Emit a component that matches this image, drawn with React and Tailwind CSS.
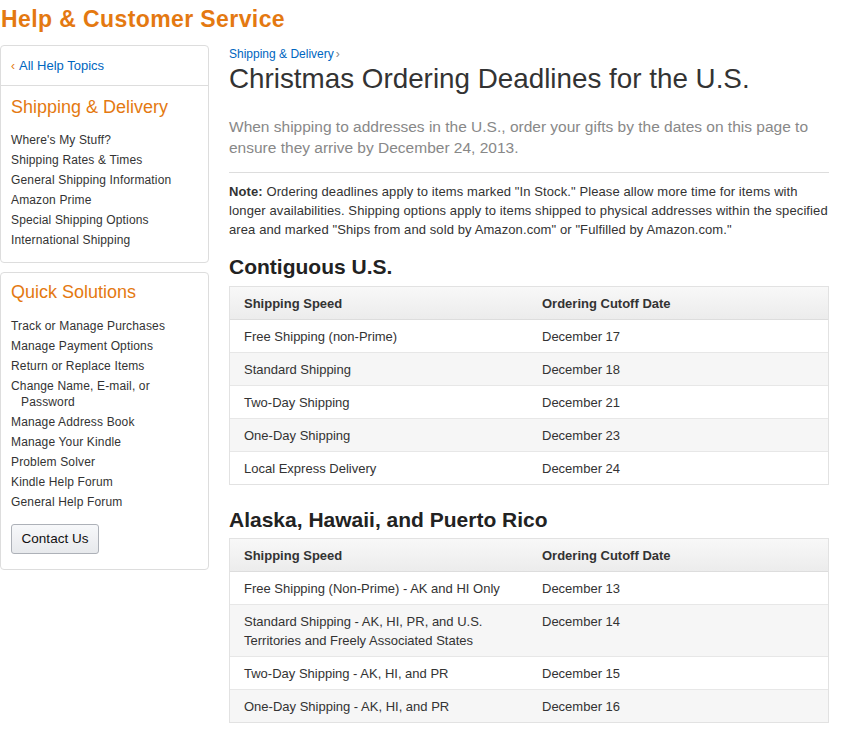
import React from "react";

const font = { fontFamily: '"Liberation Sans", Arial, sans-serif' };

function Row({ a, b, grey, last }) {
  return (
    <div
      className={`grid grid-cols-[298px_1fr] text-[13px] leading-[19px] text-[#333] ${grey ? "bg-[#f6f6f6]" : "bg-white"} ${last ? "" : "border-b border-[#e7e7e7]"}`}
    >
      <div className="pl-[14px] pr-[20px] pt-[7px] pb-[6px]">{a}</div>
      <div className="pl-[14px] pt-[7px] pb-[6px]">{b}</div>
    </div>
  );
}

function Table({ rows }) {
  return (
    <div className="border border-[#e2e2e2]">
      <div className="grid grid-cols-[298px_1fr] text-[13px] leading-[19px] font-bold text-[#333] bg-gradient-to-b from-[#f8f8f8] to-[#ececec] border-b border-[#dddddd]">
        <div className="pl-[14px] pt-[7px] pb-[6px]">Shipping Speed</div>
        <div className="pl-[14px] pt-[7px] pb-[6px]">Ordering Cutoff Date</div>
      </div>
      {rows.map((r, i) => (
        <Row key={i} a={r[0]} b={r[1]} grey={i % 2 === 1} last={i === rows.length - 1} />
      ))}
    </div>
  );
}

export default function App() {
  const shipLinks = [
    "Where's My Stuff?",
    "Shipping Rates & Times",
    "General Shipping Information",
    "Amazon Prime",
    "Special Shipping Options",
    "International Shipping",
  ];
  const quick = [
    "Track or Manage Purchases",
    "Manage Payment Options",
    "Return or Replace Items",
    "Change Name, E-mail, or Password",
    "Manage Address Book",
    "Manage Your Kindle",
    "Problem Solver",
    "Kindle Help Forum",
    "General Help Forum",
  ];
  const t1 = [
    ["Free Shipping (non-Prime)", "December 17"],
    ["Standard Shipping", "December 18"],
    ["Two-Day Shipping", "December 21"],
    ["One-Day Shipping", "December 23"],
    ["Local Express Delivery", "December 24"],
  ];
  const t2 = [
    ["Free Shipping (Non-Prime) - AK and HI Only", "December 13"],
    ["Standard Shipping - AK, HI, PR, and U.S. Territories and Freely Associated States", "December 14"],
    ["Two-Day Shipping - AK, HI, and PR", "December 15"],
    ["One-Day Shipping - AK, HI, and PR", "December 16"],
  ];
  return (
    <div className="w-[850px] min-h-[755px] bg-white text-[#333]" style={font}>
      <h1 className="pt-[6px] pl-[1px] text-[23px] leading-[26px] tracking-[0.4px] font-bold text-[#e47911]">
        Help &amp; Customer Service
      </h1>
      <div className="mt-[13px] flex gap-[20px]">
        {/* Sidebar */}
        <div className="w-[209px] shrink-0 flex flex-col gap-[9px]">
          <div className="border border-[#dddddd] rounded-[4px]">
            <div className="h-[40px] flex items-center px-[10px] border-b border-[#dddddd] text-[13px] text-[#0066c0]">
              <span className="text-[#e47911] text-[12px] mr-[4px]">‹</span>
              All Help Topics
            </div>
            <div className="px-[10px] pt-[10px] pb-[12px]">
              <div className="text-[18px] leading-[22px] text-[#e47911]">Shipping &amp; Delivery</div>
              <div className="mt-[12px] text-[12px] leading-[20px] tracking-[0.15px] text-[#333]">
                {shipLinks.map((l) => (
                  <div key={l}>{l}</div>
                ))}
              </div>
            </div>
          </div>
          <div className="border border-[#dddddd] rounded-[4px] px-[10px] pt-[8px] pb-[15px]">
            <div className="text-[18px] leading-[22px] text-[#e47911]">Quick Solutions</div>
            <div className="mt-[13px] text-[12px] leading-[16px] tracking-[0.15px] text-[#333]">
              {quick.map((l) => (
                <div key={l} className="py-[2px] pl-[10px] -indent-[10px] pr-[30px]">
                  {l}
                </div>
              ))}
            </div>
            <button className="mt-[12px] h-[30px] w-[88px] rounded-[3px] border border-[#adb1b8] bg-gradient-to-b from-[#f7f8fa] to-[#e7e9ec] text-[13.5px] text-[#111]">
              Contact Us
            </button>
          </div>
        </div>
        {/* Main */}
        <div className="w-[600px]">
          <div className="pt-[1px] text-[12px] leading-[16px] text-[#0066c0]">
            Shipping &amp; Delivery<span className="text-[#888] ml-[2px]">›</span>
          </div>
          <h2 className="mt-[1px] text-[27.8px] leading-[32px] text-[#333]">
            Christmas Ordering Deadlines for the U.S.
          </h2>
          <p className="mt-[21px] text-[15.5px] leading-[21px] text-[#888]">
            When shipping to addresses in the U.S., order your gifts by the dates on this page to ensure they arrive by December 24, 2013.
          </p>
          <div className="mt-[14px] border-t border-[#dddddd]" />
          <p className="mt-[9px] text-[13px] leading-[19px] tracking-[0.1px] text-[#333]">
            <b>Note:</b> Ordering deadlines apply to items marked "In Stock." Please allow more time for items with longer availabilities. Shipping options apply to items shipped to physical addresses within the specified area and marked "Ships from and sold by Amazon.com" or "Fulfilled by Amazon.com."
          </p>
          <h3 className="mt-[16px] text-[21px] leading-[24px] font-bold text-[#222]">Contiguous U.S.</h3>
          <div className="mt-[7px]">
            <Table rows={t1} />
          </div>
          <h3 className="mt-[23px] text-[21px] leading-[24px] font-bold text-[#222]">
            Alaska, Hawaii, and Puerto Rico
          </h3>
          <div className="mt-[6px]">
            <Table rows={t2} />
          </div>
        </div>
      </div>
    </div>
  );
}
